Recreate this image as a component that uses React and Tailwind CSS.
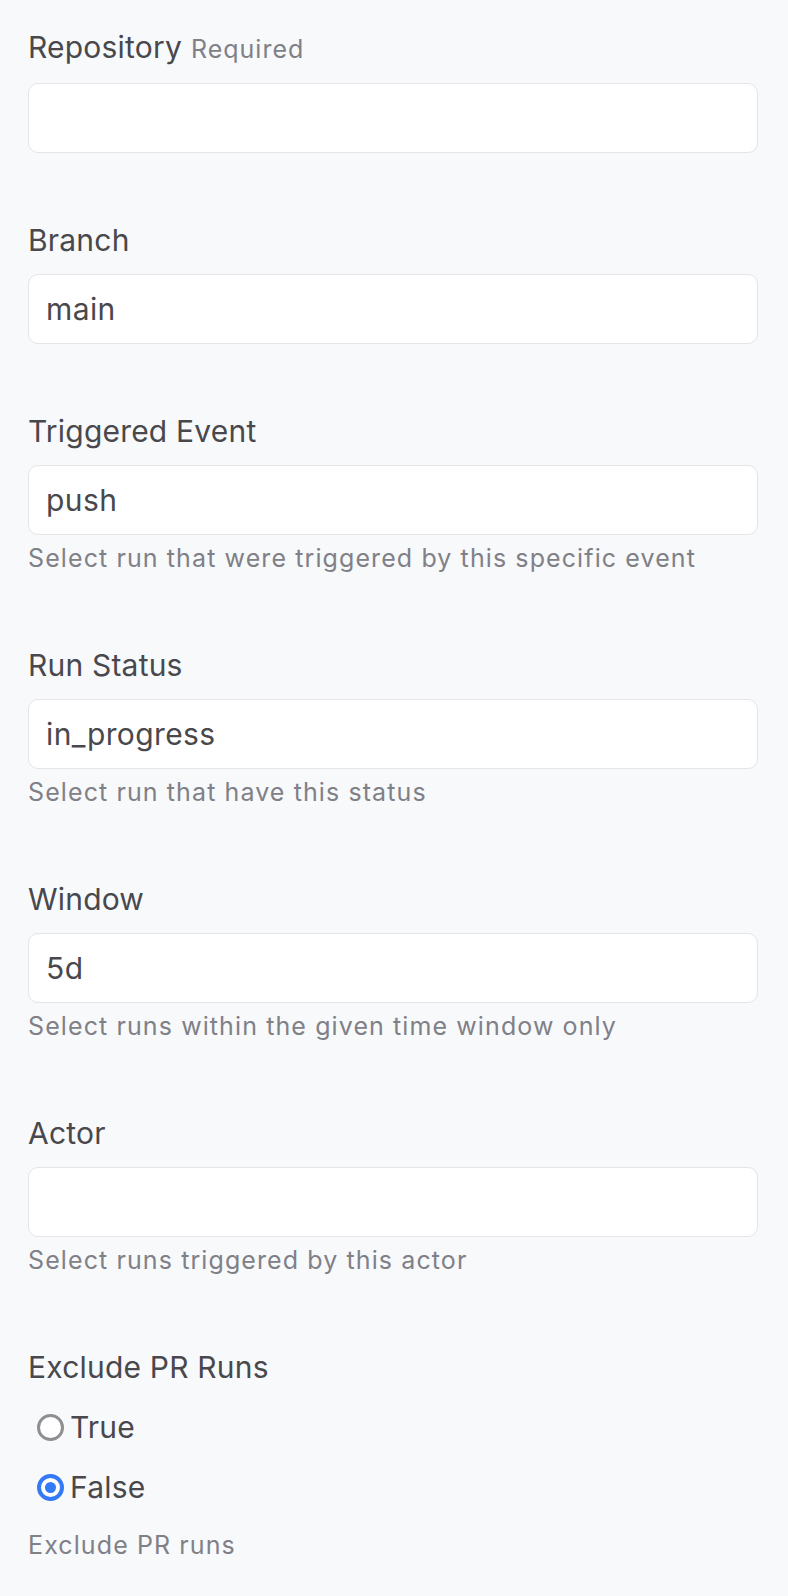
import React from 'react';

const fields = [
  { label: 'Repository', required: true, value: '' },
  { label: 'Branch', value: 'main' },
  { label: 'Triggered Event', value: 'push', help: 'Select run that were triggered by this specific event' },
  { label: 'Run Status', value: 'in_progress', help: 'Select run that have this status' },
  { label: 'Window', value: '5d', help: 'Select runs within the given time window only' },
  { label: 'Actor', value: '', help: 'Select runs triggered by this actor' },
];

const Radio = ({ checked, label }) => (
  <label className="flex h-[60px] items-center">
    <span
      className={`ml-[9px] flex h-[27px] w-[27px] items-center justify-center rounded-full bg-white ${
        checked ? 'border-[4px] border-[#3479f6]' : 'border-[3px] border-[#8e8e93]'
      }`}
    >
      {checked && <span className="h-[11px] w-[11px] rounded-full bg-[#3479f6]" />}
    </span>
    <span className="ml-[6px] text-[30px] leading-[36px] tracking-[0.2px] text-[#48484d]">{label}</span>
  </label>
);

const App = () => {
  return (
    <div className="min-h-[1596px] bg-[#f8f9fb] pl-[28px] pr-[30px] pt-[29px] font-['Inter',sans-serif]">
      {fields.map((field) => (
        <div key={field.label} className="mb-[69px]">
          <div className="mb-[16px] text-[30px] leading-[36px] tracking-[0.2px] text-[#48484d]">
            {field.label}
            {field.required && (
              <span className="ml-[9px] text-[25px] tracking-[1px] text-[#808087]">Required</span>
            )}
          </div>
          <input
            readOnly
            defaultValue={field.value}
            className="block h-[70px] w-full rounded-[10px] border-[1.5px] border-[#e4e4e9] bg-white px-[17px] text-[30px] tracking-[0.4px] text-[#48484d] outline-none"
          />
          {field.help && (
            <div className="mt-[3px] text-[25px] leading-[40px] tracking-[1.1px] text-[#808087]">{field.help}</div>
          )}
        </div>
      ))}

      <div>
        <div className="mb-[12px] text-[30px] leading-[36px] tracking-[0.2px] text-[#48484d]">Exclude PR Runs</div>
        <Radio label="True" />
        <Radio label="False" checked />
        <div className="mt-[8px] text-[25px] leading-[40px] tracking-[1.1px] text-[#808087]">Exclude PR runs</div>
      </div>
    </div>
  );
};

export default App;
